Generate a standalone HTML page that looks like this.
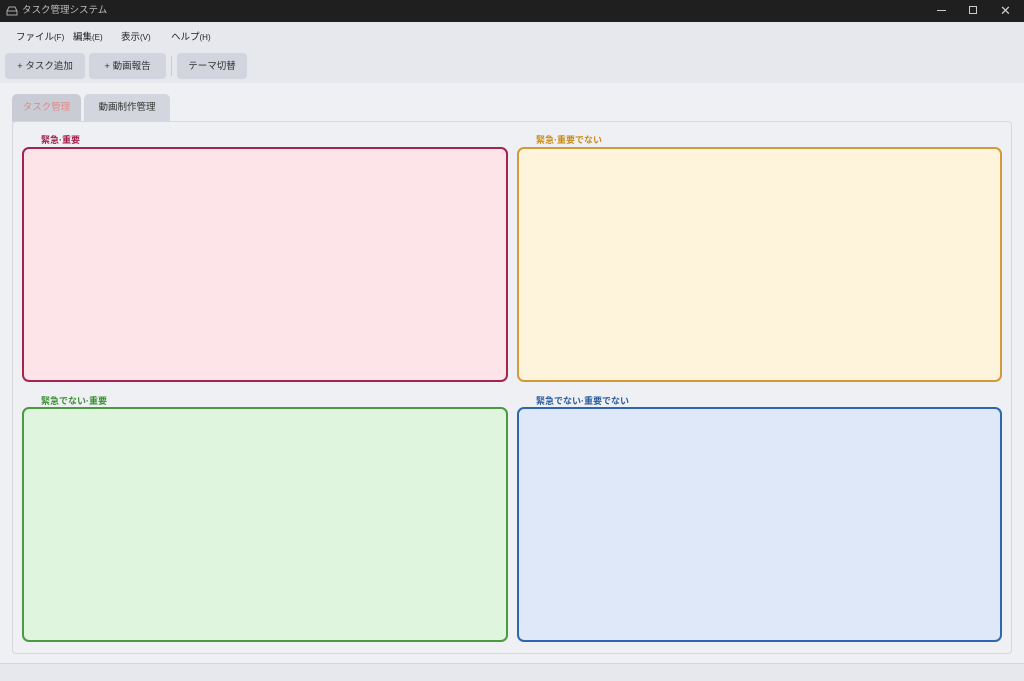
<!DOCTYPE html><html><head><meta charset="utf-8"><style>
*{box-sizing:border-box;margin:0;padding:0}
body{width:1024px;height:681px;overflow:hidden;background:#eff0f4;font-family:"Liberation Sans","Noto Sans CJK JP",sans-serif;position:relative}
.a{position:absolute;white-space:nowrap}
.title{left:0;top:0;width:1024px;height:22px;background:#1f1f1f;color:#bdbdbd;font-size:9.5px;line-height:22px;padding-left:22px}
.menu{left:0;top:22px;width:1024px;height:61px;background:#e6e8ee}
.m{top:29px;font-size:9.5px;color:#222}
.m small{font-size:8px}
.btn{top:53px;height:26px;background:#d2d5dd;border-radius:4px;font-size:9.5px;color:#333;line-height:28px;text-align:center}
.tab{top:94px;height:28px;border-radius:5px 5px 0 0;background:#d3d6de;font-size:9.5px;line-height:28px;text-align:center}
.q{border:2px solid;border-radius:7px}
.l{font-size:9px;font-weight:bold}
</style></head><body>
<div class="a title">タスク管理システム</div>
<svg class="a" style="left:6px;top:6px" width="12" height="10"><path d="M1 5 L3 1 H9 L11 5 V9 H1 Z M1 5 H11" fill="none" stroke="#aaa" stroke-width="1"/></svg>
<div class="a" style="left:937px;top:10px;width:9px;height:1px;background:#ccc"></div>
<div class="a" style="left:969px;top:6px;width:8px;height:8px;border:1px solid #ccc"></div>
<div class="a" style="left:1000px;top:0;color:#ccc;font-size:13px;line-height:22px">✕</div>
<div class="a menu"></div>
<div class="a m" style="left:16px">ファイル<small>(F)</small></div>
<div class="a m" style="left:73px">編集<small>(E)</small></div>
<div class="a m" style="left:121px">表示<small>(V)</small></div>
<div class="a m" style="left:171px">ヘルプ<small>(H)</small></div>
<div class="a btn" style="left:5px;width:80px">+ タスク追加</div>
<div class="a btn" style="left:89px;width:77px">+ 動画報告</div>
<div class="a" style="left:171px;top:56px;width:1px;height:20px;background:#ccc"></div>
<div class="a btn" style="left:177px;width:70px">テーマ切替</div>
<div class="a tab" style="left:12px;width:69px;background:#c9ccd5;color:#e08a86">タスク管理</div>
<div class="a tab" style="left:84px;width:86px;color:#333">動画制作管理</div>
<div class="a" style="left:12px;top:121px;width:1000px;height:533px;border:1px solid #d6d8de;border-radius:4px;background:#eff0f4"></div>
<div class="a l" style="left:41px;top:133px;color:#a3224a">緊急·重要</div>
<div class="a l" style="left:536px;top:133px;color:#c98d1e">緊急·重要でない</div>
<div class="a l" style="left:41px;top:394px;color:#3f8f38">緊急でない·重要</div>
<div class="a l" style="left:536px;top:394px;color:#2c5e9e">緊急でない·重要でない</div>
<div class="a q" style="left:22px;top:147px;width:486px;height:235px;background:#fce4e9;border-color:#a3244e"></div>
<div class="a q" style="left:517px;top:147px;width:485px;height:235px;background:#fef4dc;border-color:#d19a3a"></div>
<div class="a q" style="left:22px;top:407px;width:486px;height:235px;background:#dff5dd;border-color:#4a9a3f"></div>
<div class="a q" style="left:517px;top:407px;width:485px;height:235px;background:#dfe8f8;border-color:#2e66b0"></div>
<div class="a" style="left:0;top:663px;width:1024px;height:18px;background:#e6e8ee;border-top:1px solid #d4d6dc"></div>
</body></html>
